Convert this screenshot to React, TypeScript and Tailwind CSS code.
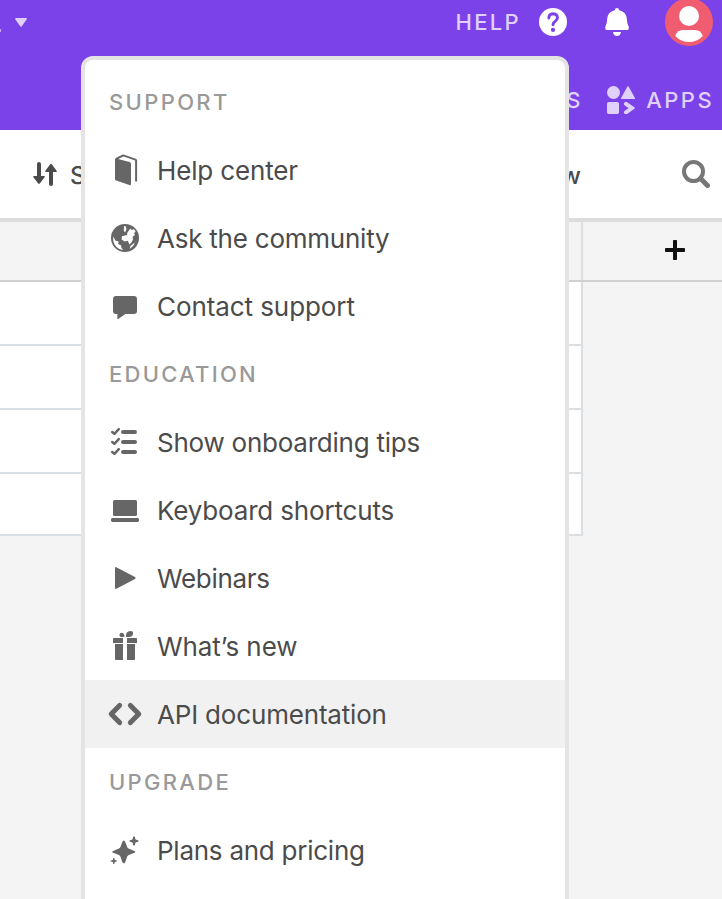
import React from 'react';

const ICONS: Record<string, React.ReactNode> = {
  book: (
    <>
      <path d="M6 5.6 Q6 4.4 7 4.6 L20.6 8 Q22 8.5 22 9.8 V30 Q22 31.6 20.4 31.1 L7.2 26.6 Q6 26.2 6 25 Z" />
      <path d="M7 5 L14.3 1.4 L26.4 5.6 Q27.1 5.9 27.1 6.6 V27.6" fill="none" stroke="currentColor" strokeWidth="2" strokeLinejoin="round" />
    </>
  ),
  globe: (
    <>
      <circle cx="16" cy="16" r="14" />
      <path fill="#fff" d="M15 4 L17 4.4 L17.4 7.4 L16 10.6 L14.8 8.8 Z M21.4 6.4 L22.6 8 L25 7.2 L26.6 9.4 L25 11.4 L26 13 L23.6 14.8 L24 17.6 L22.4 20.6 L20.4 22.4 L18.8 18.8 L15.6 19.4 L12.6 17.4 L13 14.2 L18 13 L18.4 10.4 Z M4.2 14.4 L6.4 18.4 L10 19.8 L8.8 21.8 L12.2 23.6 L12.4 26 L14.4 28 Q8.6 27.4 5.6 22.4 Q3.6 18.8 4.2 14.4 Z M26 20.4 Q24.6 24.6 20.6 27 L21.6 23.8 Z" />
    </>
  ),
  chat: <path d="M7 6 H25 Q28 6 28 9 V21 Q28 24 25 24 H16.4 L9.2 29 Q8.4 29.4 8.4 28.6 V24 H7 Q4 24 4 21 V9 Q4 6 7 6 Z" />,
  tips: (
    <g fill="none" stroke="currentColor" strokeLinecap="round" strokeLinejoin="round">
      <path strokeWidth="4" d="M14 6 H26 M14 16 H26 M14 26 H26" />
      <path strokeWidth="2.5" d="M3.2 6 L5.4 7.8 L9.8 3.2 M3.2 16 L5.4 17.8 L9.8 13.2 M3.2 26 L5.4 27.8 L9.8 23.2" />
    </g>
  ),
  laptop: (
    <>
      <rect x="4" y="6" width="24" height="16" rx="1.5" />
      <rect x="2" y="24" width="28" height="4" rx="1.4" />
    </>
  ),
  play: <path d="M6 6.2 Q6 4.6 7.3 5.2 L26 15 Q27.4 16 26 17 L7.3 26.8 Q6 27.4 6 25.8 Z" />,
  gift: (
    <>
      <path d="M4.8 8 H14 V13 H4 V8.8 Q4 8 4.8 8 Z M18 8 H27.2 Q28 8 28 8.8 V13 H18 Z M6 14 H14 V30 H7 Q6 30 6 29 Z M18 14 H26 V29 Q26 30 25 30 H18 Z" />
      <path d="M10.4 5.2 Q10.6 2.8 12.8 2.8 Q15.4 3 15.4 7 H12.4 Q10.4 6.8 10.4 5.2 Z" />
      <path d="M17 7 Q16.5 1 21.5 1 Q24.6 1.2 24 4 Q23.5 6.8 20 7 Z" />
    </>
  ),
  code: <path d="M10.6 7.4 L2.2 16 L10.6 24.6 M21.4 7.4 L29.8 16 L21.4 24.6" fill="none" stroke="currentColor" strokeWidth="5" strokeLinecap="round" strokeLinejoin="round" />,
  sparkles: (
    <>
      <path d="M14.8 6.6 Q15.8 6.6 16.4 8.2 L18.2 13 Q18.6 14.1 19.7 14.6 L24.8 16.7 Q26.4 17.3 26.4 17.9 Q26.4 18.5 24.8 19.1 L19.7 20.9 Q18.6 21.4 18.2 22.5 L16.4 27.7 Q15.8 29.3 14.8 29.3 Q13.8 29.3 13.2 27.7 L11.4 22.5 Q11 21.4 9.9 20.9 L4.8 19.1 Q3.2 18.5 3.2 17.9 Q3.2 17.3 4.8 16.7 L9.9 14.6 Q11 14.1 11.4 13 L13.2 8.2 Q13.8 6.6 14.8 6.6 Z" />
      <path d="M25 2.2 Q26 2.2 26.5 5.4 Q29.8 6 29.8 6.9 Q29.8 7.8 26.5 8.4 Q26 11.7 25 11.7 Q24 11.7 23.5 8.4 Q20.2 7.8 20.2 6.9 Q20.2 6 23.5 5.4 Q24 2.2 25 2.2 Z" />
      <path d="M4.8 23.8 Q5.5 23.8 5.8 26 Q8.2 26.4 8.2 27 Q8.2 27.6 5.8 28 Q5.5 30.3 4.8 30.3 Q4.1 30.3 3.8 28 Q1.4 27.6 1.4 27 Q1.4 26.4 3.8 26 Q4.1 23.8 4.8 23.8 Z" />
    </>
  ),
};

function Item({ icon, label, track, active = false }: { icon: string; label: string; track: string; active?: boolean }) {
  return (
    <div className={`flex h-[68px] shrink-0 items-center gap-4 pl-6 ${active ? 'bg-[#f1f1f1]' : ''}`}>
      <svg className="size-8 shrink-0 overflow-visible text-[#666]" viewBox="0 0 32 32" fill="currentColor">
        {ICONS[icon]}
      </svg>
      <span className={`whitespace-nowrap pt-[2px] text-[26px] leading-8 text-[#4b4b4b] ${track}`}>{label}</span>
    </div>
  );
}

function Heading({ label, track }: { label: string; track: string }) {
  return (
    <div className={`flex h-[68px] shrink-0 items-center pl-6 text-[22px] font-[550] text-[#999] ${track}`}>
      {label}
    </div>
  );
}

export default function App() {
  return (
    <div className="relative flex h-[899px] w-[722px] flex-col overflow-hidden bg-[#f4f4f4] font-['Inter',sans-serif]">
      <header className="flex h-[130px] shrink-0 flex-col bg-[#7c42e9] text-[#e0d1fa]">
        <div className="flex h-11 shrink-0 items-center">
          <span className="h-[3px] w-px translate-y-2 bg-[#c3a7f5]" />
          <svg className="ml-[14px] h-[9px] w-3" viewBox="0 0 12 9" fill="currentColor">
            <path d="M.8 0 H11.2 Q12.4 0 11.7 1.2 L6.8 8.2 Q6 9.2 5.2 8.2 L.3 1.2 Q-.4 0 .8 0 Z" />
          </svg>
          <span className="ml-auto text-[22px] font-[550] tracking-[2.3px]">HELP</span>
          <svg className="ml-[18px] size-7 shrink-0" viewBox="0 0 28 28">
            <circle cx="14" cy="14" r="14" fill="#fff" />
            <path d="M9.8 10 Q10 5.8 14 5.7 Q18.4 5.8 18.4 9.8 Q18.4 12 16 13.4 Q14 14.6 14 16.8" fill="none" stroke="#7c42e9" strokeWidth="2.9" strokeLinecap="round" />
            <circle cx="14" cy="21.9" r="2.1" fill="#7c42e9" />
          </svg>
          <svg className="ml-[38px] h-7 w-6 shrink-0" viewBox="0 0 24 28" fill="#fff">
            <path d="M12 0 Q14 0 14.2 2.2 Q21.6 4 21.8 11 Q22 16 23.6 18.6 Q24.4 22 22.4 22 H1.6 Q-.4 22 .4 18.6 Q2 16 2.2 11 Q2.4 4 9.8 2.2 Q10 0 12 0 Z" />
            <path d="M8 24 H16 Q15.4 28 12 28 Q8.6 28 8 24 Z" />
          </svg>
          <svg className="mr-[9px] ml-9 size-12 shrink-0" viewBox="0 0 48 48">
            <circle cx="24" cy="24" r="24" fill="#f15d70" />
            <circle cx="24" cy="18" r="10" fill="#fff" />
            <path d="M10.2 38 Q12 32 18 32 H30 Q36 32 37.8 38 Q32 44 24 44 Q16 44 10.2 38 Z" fill="#fff" />
          </svg>
        </div>
        <div className="flex h-[86px] shrink-0 items-center justify-end pt-[26px] pr-2 text-[22px] font-[550]">
          <span>S</span>
          <svg className="ml-[27px] size-7 shrink-0" viewBox="0 0 28 28" fill="currentColor">
            <circle cx="6.5" cy="6.5" r="6.5" />
            <path d="M20.3 .8 Q21 -.4 21.7 .8 L27.8 11.8 Q28.4 13 27.2 13 H14.8 Q13.6 13 14.2 11.8 Z" />
            <rect y="16" width="12" height="12" rx="1.8" />
            <path d="M19 17.8 L25 22 L19 26.4" fill="none" stroke="currentColor" strokeWidth="4" strokeLinecap="round" strokeLinejoin="miter" />
          </svg>
          <span className="ml-[11px] tracking-[2.4px]">APPS</span>
        </div>
      </header>

      <div className="flex h-[92px] shrink-0 items-center border-b-4 border-[#dcdcdc] bg-white text-2xl font-[550] text-[#4b4b4b]">
        <svg className="ml-[33px] h-6 w-6 shrink-0" viewBox="0 0 24 24" fill="currentColor">
          <path d="M4 2 Q4 0 6 0 Q8 0 8 2 V14 H11 Q12.6 14 11.6 15.3 L7 21.2 Q6 22.4 5 21.2 L.4 15.3 Q-.6 14 1 14 H4 Z M16 22 V10 H13 Q11.4 10 12.4 8.7 L17 2.4 Q18 1.2 19 2.4 L23.6 8.7 Q24.6 10 23 10 H20 V22 Q20 24 18 24 Q16 24 16 22 Z" />
        </svg>
        <span className="ml-[13px] pt-[3px]">Sort</span>
        <span className="ml-auto w-[100px] pt-[3px] text-right">view</span>
        <svg className="mr-3 ml-[101px] h-7 w-7 shrink-0" viewBox="0 0 28 28" fill="none" stroke="#777">
          <circle cx="11.5" cy="11.5" r="9.5" strokeWidth="4" />
          <path d="M18.5 18.5 L25.5 25.5" strokeWidth="5" strokeLinecap="round" />
        </svg>
      </div>

      <div className="flex h-[60px] shrink-0 border-b-2 border-[#d0d0d0]">
        <div className="w-[583px] border-r-2 border-[#dadfe3]" />
        <svg className="mt-[18px] ml-[82px] size-5" viewBox="0 0 20 20" fill="#111">
          <rect x="8" width="4" height="20" rx=".8" />
          <rect y="8" width="20" height="4" rx=".8" />
        </svg>
      </div>
      {[0, 1, 2, 3].map((row) => (
        <div key={row} className={`w-[583px] shrink-0 border-r-2 border-b-2 border-[#dadfe3] bg-white ${row === 3 ? 'h-[62px]' : 'h-16'}`} />
      ))}

      <div className="absolute top-14 left-[81px] flex h-[900px] w-[488px] flex-col rounded-xl border-4 border-[#e4e4e4] bg-white pt-2">
        <Heading label="SUPPORT" track="tracking-[2.35px]" />
        <Item icon="book" label="Help center" track="tracking-[-0.15px]" />
        <Item icon="globe" label="Ask the community" track="tracking-[-0.23px]" />
        <Item icon="chat" label="Contact support" track="tracking-[-0.08px]" />
        <Heading label="EDUCATION" track="tracking-[2.25px]" />
        <Item icon="tips" label="Show onboarding tips" track="tracking-[-0.24px]" />
        <Item icon="laptop" label="Keyboard shortcuts" track="tracking-[-0.17px]" />
        <Item icon="play" label="Webinars" track="tracking-[-0.3px]" />
        <Item icon="gift" label="What’s new" track="tracking-[-0.08px]" />
        <Item icon="code" label="API documentation" track="tracking-[-0.18px]" active />
        <Heading label="UPGRADE" track="tracking-[2.3px]" />
        <Item icon="sparkles" label="Plans and pricing" track="tracking-[-0.25px]" />
      </div>
    </div>
  );
}
